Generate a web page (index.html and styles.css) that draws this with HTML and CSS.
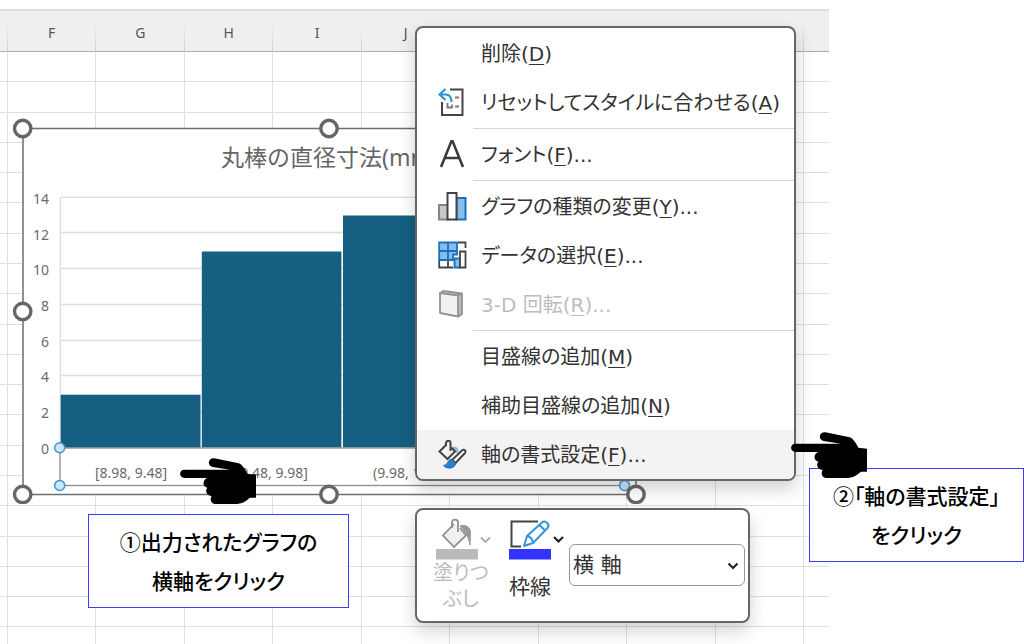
FILE: index.html
```html
<!DOCTYPE html>
<html lang="ja">
<head>
<meta charset="utf-8">
<meta name="viewport" content="width=device-width, initial-scale=1">
<title>軸の書式設定</title>
<link rel="stylesheet" href="styles.css">
</head>
<body>
<main class="stage">
  <section class="sheet">
    <div class="columns sheet-head">
      <span></span><span>F</span><span>G</span><span>H</span><span>I</span><span>J</span><span></span><span></span><span></span><span></span><span></span>
    </div>
    <div class="sheet-body">
      <div class="columns lines"><i></i><i></i><i></i><i></i><i></i><i></i><i></i><i></i><i></i><i></i><i></i></div>
      <div class="rows"><i></i><i></i><i></i><i></i><i></i><i></i><i></i><i></i><i></i><i></i><i></i><i></i><i></i><i></i><i></i><i></i><i></i><i></i><i></i><i></i></div>
    </div>
  </section>

  <svg class="chart" width="634" height="386" viewBox="12 118 634 386" role="img" aria-label="丸棒の直径寸法(mm)">
    <rect x="23" y="128.500" width="613" height="366" fill="#fff" stroke="#6e6e6e" stroke-width="1.500"/>
    <text class="chart-title" x="221" y="166">丸棒の直径寸法(mm)</text>
    <g stroke="#dcdcdc" stroke-width="1.300">
      <path d="M60 197.300H624M60 232.500H624M60 268.500H624M60 304.500H624M60 340.500H624M60 375.500H624M60 411.500H624M60.300 197V448"/>
    </g>
    <g fill="#156082">
      <rect x="60.700" y="394.700" width="139.800" height="53"/>
      <rect x="201.800" y="251.500" width="139.600" height="196"/>
      <rect x="343" y="215.500" width="139.800" height="232"/>
    </g>
    <g class="tick" text-anchor="end">
      <text x="49" y="204">14</text>
      <text x="49" y="240">12</text>
      <text x="49" y="275">10</text>
      <text x="49" y="311">8</text>
      <text x="49" y="347">6</text>
      <text x="49" y="382">4</text>
      <text x="49" y="418">2</text>
      <text x="49" y="454">0</text>
    </g>
    <g class="tick" text-anchor="middle">
      <text x="131" y="478">[8.98, 9.48]</text>
      <text x="272" y="478">(9.48, 9.98]</text>
      <text x="413" y="478">(9.98, 10.48]</text>
    </g>
    <rect x="60" y="448" width="564.500" height="37.500" fill="none" stroke="#8c8c8c" stroke-width="1.300"/>
    <g fill="#cfe4f7" stroke="#3c96e0" stroke-width="1.500">
      <circle cx="59.700" cy="447.700" r="5"/><circle cx="59.700" cy="485.400" r="5"/><circle cx="624.500" cy="485.400" r="5"/>
    </g>
    <g fill="#fff" stroke="#666" stroke-width="3.400">
      <circle cx="22.700" cy="128.500" r="8.200"/><circle cx="329" cy="128.500" r="8.200"/>
      <circle cx="22.700" cy="311.400" r="8.200"/><circle cx="22.700" cy="494.400" r="8.200"/>
      <circle cx="329" cy="494.400" r="8.200"/><circle cx="636" cy="494.400" r="8.200"/>
    </g>
  </svg>

  <menu class="panel context-menu">
    <li><button class="item"><span class="icon"></span><span>削除(<u>D</u>)</span></button></li>
    <li><button class="item">
      <svg class="icon" viewBox="0 0 30 30" fill="none"><path d="M12 1.500H24.500V27H4V14" stroke="#444" stroke-width="2"/><path d="M7.500 1L1.500 6.500L7.500 12M2 6.500H7.500C12 6.500 13.500 9.500 13.500 14" stroke="#2b93d6" stroke-width="2.200"/><path d="M17 9.500h4M17 18.500h4M9.500 15v4.500h4.500v-3" stroke="#777" stroke-width="1.800"/></svg>
      <span>リセットしてスタイルに合わせる(<u>A</u>)</span></button></li>
    <li class="separator"></li>
    <li><button class="item">
      <svg class="icon" viewBox="0 0 30 30" fill="none"><path d="M3 27L13.500 1H14.500L25 27M7 18H21" stroke="#3c3c3c" stroke-width="2.600"/></svg>
      <span>フォント(<u>F</u>)...</span></button></li>
    <li class="separator"></li>
    <li><button class="item">
      <svg class="icon" viewBox="0 0 30 30" stroke-width="2"><path d="M1 13H10V27.500H1Z" fill="#c9c7c5" stroke="#858585"/><path d="M18.500 6H27.500V27.500H18.500Z" fill="#83beec" stroke="#1b6fbd"/><path d="M9.500 1H18.500V27.500H9.500Z" fill="#fff" stroke="#444"/></svg>
      <span>グラフの種類の変更(<u>Y</u>)...</span></button></li>
    <li><button class="item">
      <svg class="icon" viewBox="0 0 30 30" fill="none" stroke-width="1.800"><path d="M20 1.500H27.500V7M1.200 19V26.500H15M10 19v7" stroke="#444"/><path d="M1.200 1.500H19V13.500H15V19H1.200Z" fill="#83beec" stroke="#1b6fbd"/><path d="M1 10H19M10 1.500V19" stroke="#1b6fbd"/><path d="M16.500 17.500H22V26.500H16.500Z" fill="#83beec" stroke="#1b6fbd"/><path d="M22 10.500H27.500V26.500H22Z" fill="#fff" stroke="#444"/></svg>
      <span>データの選択(<u>E</u>)...</span></button></li>
    <li><button class="item" disabled>
      <svg class="icon" viewBox="0 0 30 30" stroke="#939393" stroke-width="1.800" stroke-linejoin="round"><path d="M2 3L5.500 0.900L24 3.500V24L20.500 26.500Z" fill="#bbb"/><path d="M2 3L20 5.500V26.500L2 23Z" fill="#f1f1f1"/><path d="M20 5.500L24 3.500" fill="none"/></svg>
      <span>3-D 回転(<u>R</u>)...</span></button></li>
    <li class="separator"></li>
    <li><button class="item"><span class="icon"></span><span>目盛線の追加(<u>M</u>)</span></button></li>
    <li><button class="item"><span class="icon"></span><span>補助目盛線の追加(<u>N</u>)</span></button></li>
    <li><button class="item is-active">
      <svg class="icon" viewBox="0 0 30 30" fill="none" stroke-width="2"><path d="M15.500 8C18.500 7.500 19.500 10 19 13" stroke="#83beec" stroke-width="3"/><path d="M8 5L1.500 11.500L9.500 19L17 11.500L13.500 7.500M12.500 11V3C12.500 0 8.500 0 8 3V6" stroke="#444"/><path d="M14 20L24.500 10C26.500 9 28.500 11 27 13L17.500 23Z" fill="#fff" stroke="#444"/><path d="M13.500 19.500C9 19.500 10.500 25 5.500 25.500C8 29 17 29.500 17.500 23.500Z" fill="#2b7fcb" stroke="#1b6fbd" stroke-width="1"/></svg>
      <span>軸の書式設定(<u>F</u>)...</span></button></li>
  </menu>

  <section class="panel mini-bar">
    <button class="tool" disabled>
      <svg width="64" height="46" viewBox="0 0 64 46" fill="none"><path d="M21 10L10 21.500L21 33L33 21.500L27 14" fill="#f0f0f0" stroke="#8f8f8f" stroke-width="1.800"/><path d="M25 18V9C25 4.500 19 4.500 19 9V14" stroke="#8f8f8f" stroke-width="1.800"/><path d="M27 12C32 10 37 13 37.500 18L37 31C35.500 23 33 18 27 12Z" fill="#999" stroke="#999"/><path d="M48 23.500L52.500 28L57 23.500" stroke="#aaa" stroke-width="1.800"/><path d="M3 35H45V45.500H3Z" fill="#bababa"/></svg>
      <span>塗りつ<br>ぶし</span>
    </button>
    <button class="tool outline">
      <svg width="64" height="46" viewBox="0 0 64 46" fill="none"><path d="M32 7.500H5.500V32.500H15" stroke="#444" stroke-width="2"/><path d="M18 32L21 22L36 8.500C39 5.500 44.500 10.500 41.500 14L27 29ZM21 22C24 22.500 26.500 25 27 29M33.500 11L39 16.500" fill="#fff" stroke="#3195d8" stroke-width="2" stroke-linejoin="round"/><path d="M48 23L52.500 27.500L57 23" stroke="#222" stroke-width="2.200"/><path d="M3 35H45V45.500H3Z" fill="#3333ff"/></svg>
      <span>枠線</span>
    </button>
    <div class="picker">
      <select aria-label="グラフ要素"><option>横 軸</option></select>
      <svg width="12" height="8" viewBox="0 0 12 8" fill="none"><path d="M1.500 1.500L6 6L10.500 1.500" stroke="#222" stroke-width="2.200"/></svg>
    </div>
  </section>

  <p class="callout callout-axis">①出力されたグラフの<br>横軸をクリック</p>
  <p class="callout callout-format">②「軸の書式設定」<br>をクリック</p>

  <svg class="hand hand-axis" width="77" height="48" viewBox="0 0 231 144" aria-hidden="true"><use href="#hand"/></svg>
  <svg class="hand hand-format" width="77" height="48" viewBox="0 0 231 144" aria-hidden="true">
    <g id="hand"><path d="M13 38H150L98 30C80 25 84 3 103 4L176 19C186 22 194 35 202 50L228 53V122H210C196 132 190 141 162 141H108C94 141 88 128 95 117C80 115 74 101 82 92C67 90 67 70 81 63H13C-4 63 -4 38 13 38Z"/></g>
  </svg>
</main>
</body>
</html>
```
FILE: styles.css
```css
* {
  box-sizing: border-box;
}

body {
  margin: 0;
  background: #fff;
  font-family: "DejaVu Sans", "Noto Sans CJK JP", sans-serif;
  color: #333;
}

.stage {
  position: relative;
  min-height: 100vh;
  overflow: hidden;
}

/* Worksheet */
.sheet {
  display: flex;
  flex-direction: column;
  width: 81%;
  min-height: 100vh;
  padding-top: 9px;
}

.columns {
  display: grid;
  grid-template-columns: 16fr repeat(9, 177fr) 50fr;
}

.sheet-head {
  height: 43px;
  background: #efefef;
  border-top: 2px solid #dedede;
  border-bottom: 1px solid #adadad;
  font: 14px/44px "Noto Sans", sans-serif;
  color: #555;
  text-align: center;
}

.sheet-head span {
  border-right: 1px solid;
  border-image: linear-gradient(#efefef 30%, #c8c8c8) 1;
}

.sheet-head span:last-child,
.lines i:last-child {
  border-right: 0;
}

.sheet-body {
  display: grid;
  flex: 1;
}

.lines,
.rows {
  grid-area: 1 / 1;
}

.lines i {
  border-right: 1px solid #dfdfdf;
}

.rows {
  display: flex;
  flex-direction: column;
}

.rows i {
  flex: 30;
  border-bottom: 1px solid #dfdfdf;
}

.rows i:last-child {
  flex: 17;
  border-bottom: 0;
}

/* Chart object floating on the sheet */
.chart {
  position: absolute;
  left: 12px;
  top: 118px;
}

.chart-title {
  font: 23px "Noto Sans", "Noto Sans CJK JP", sans-serif;
  fill: #666;
}

.tick {
  font: 14px "Noto Sans", sans-serif;
  fill: #6a6a6a;
}

/* Floating panels */
.panel {
  position: absolute;
  margin: 0;
  background: #fff;
  border: 2px solid #666;
  border-radius: 8px;
  box-shadow: 0 8px 18px rgba(0, 0, 0, 0.18);
}

.context-menu {
  left: 415px;
  top: 26px;
  width: 381px;
  padding: 1px 0 0;
  list-style: none;
  overflow: hidden;
}

.item {
  display: flex;
  align-items: center;
  gap: 13px;
  width: 100%;
  height: 49px;
  padding: 0 0 0 21px;
  border: 0;
  background: none;
  font: inherit;
  font-size: 20px;
  font-feature-settings: "palt";
  line-height: 28px;
  color: #333;
  text-align: left;
  white-space: nowrap;
}

.item u {
  text-decoration-thickness: 1px;
  text-underline-offset: 3px;
}

.item:disabled {
  color: #bdbdbd;
}

.item.is-active {
  background: #f3f3f3;
}

.icon {
  flex: none;
  width: 30px;
  height: 30px;
}

.separator {
  height: 3px;
  padding-top: 1px;
  margin-left: 56px;
}

.separator::before {
  content: "";
  display: block;
  border-top: 1px solid #d4d4d4;
}

.mini-bar {
  left: 415px;
  top: 508px;
  display: flex;
  align-items: flex-start;
  width: 335px;
  min-height: 115px;
  padding: 4px 3px 4px 16px;
}

.tool {
  display: flex;
  flex-direction: column;
  width: 73px;
  padding: 0;
  border: 0;
  background: none;
  font: inherit;
  font-size: 20px;
  font-feature-settings: "palt";
  line-height: 26px;
  color: #333;
  white-space: nowrap;
}

.tool span {
  min-width: 48px;
  text-align: center;
}

.tool:disabled {
  color: #bdbdbd;
}

.tool.outline {
  gap: 15px;
  align-items: flex-start;
  font-size: 21px;
  line-height: 24px;
}

.tool:disabled span {
  align-self: flex-start;
}

.picker {
  position: relative;
  flex: 1;
  margin: 30px 0 0 -10px;
}

.picker select {
  width: 100%;
  height: 42px;
  padding: 0 3px;
  appearance: none;
  border: 1px solid #999;
  border-radius: 6px;
  background: #fff;
  font: inherit;
  font-size: 21px;
  color: #333;
}

.picker svg {
  position: absolute;
  right: 6px;
  top: 18px;
  pointer-events: none;
}

/* Step annotations */
.callout {
  position: absolute;
  margin: 0;
  padding: 7px 0;
  border: 1px solid #3d3dff;
  background: #fff;
  font: 500 21px/39px "Noto Sans CJK JP", sans-serif;
  font-feature-settings: "palt";
  color: #000;
  text-align: center;
  white-space: nowrap;
}

.callout-axis {
  left: 88px;
  top: 514px;
  width: 261px;
}

.callout-format {
  left: 809px;
  top: 468px;
  width: 215px;
}

.hand {
  position: absolute;
  fill: #000;
}

.hand-axis {
  left: 180px;
  top: 457px;
}

.hand-format {
  left: 791px;
  top: 431px;
}
```
